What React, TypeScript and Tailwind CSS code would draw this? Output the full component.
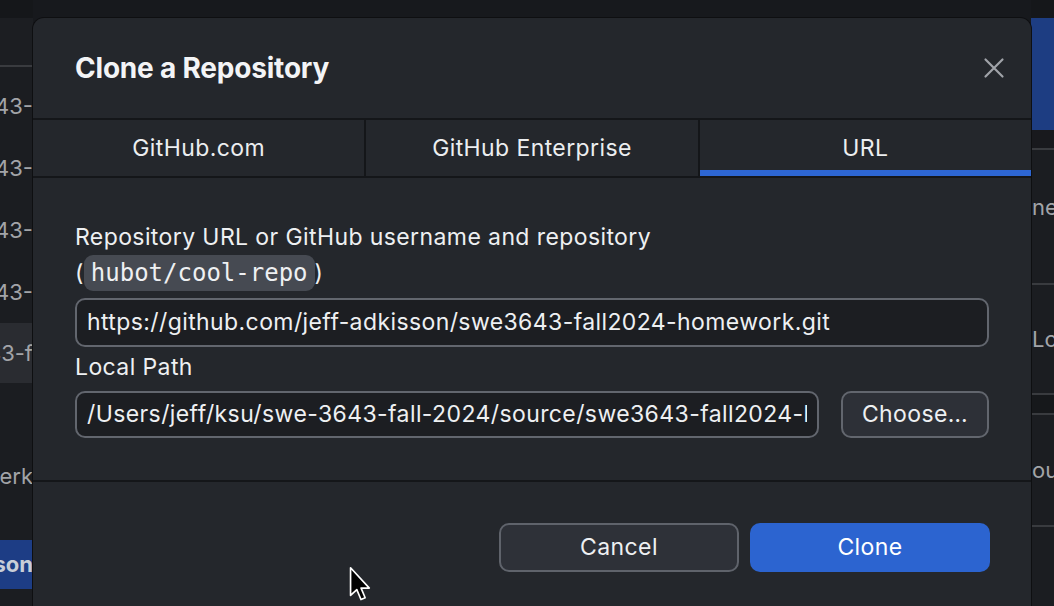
import React from "react";

function LeftStrip() {
  const rows = ["swe3643-", "swe3643-", "swe3643-", "swe3643-"];
  return (
    <div className="flex w-[33px] shrink-0 flex-col overflow-hidden bg-[#1b1d21] text-[22px] text-[#a2a4a8]">
      <div className="h-[18px] shrink-0 bg-[#15171a]" />
      <div className="h-[49px] shrink-0 border-b-2 border-[#393b3f] bg-[#1c1e22]" />
      <div className="h-[8px] shrink-0" />
      {rows.map((r, i) => (
        <div key={i} className="flex h-[62px] shrink-0 items-center justify-end whitespace-nowrap">
          {r}
        </div>
      ))}
      <div className="flex h-[60px] shrink-0 items-center justify-end whitespace-nowrap bg-[#2a2c31]">
        swe3643-f
      </div>
      <div className="h-[78px] shrink-0" />
      <div className="flex h-[30px] shrink-0 items-center justify-end whitespace-nowrap">Clerk</div>
      <div className="h-[49px] shrink-0" />
      <div className="flex h-[49px] shrink-0 items-center justify-end whitespace-nowrap bg-[#1d3d85] font-bold text-[#c9ced8]">
        Adkisson
      </div>
    </div>
  );
}

function RightStrip() {
  return (
    <div className="flex w-[23px] shrink-0 flex-col overflow-hidden bg-[#1b1d21] text-[22px] text-[#a2a4a8]">
      <div className="h-[18px] shrink-0 bg-[#15171a]" />
      <div className="h-[112px] shrink-0 bg-[#1d3d82]" />
      <div className="h-[20px] shrink-0 border-b-2 border-[#393b3f] bg-[#18191d]" />
      <div className="h-[133px] shrink-0 whitespace-nowrap pl-[1px] pt-[42px] leading-[30px]">ne</div>
      <div className="h-[2px] shrink-0 bg-[#393b3f]" />
      <div className="flex h-[108px] shrink-0 items-center whitespace-nowrap pl-[1px]">Lo</div>
      <div className="h-[22px] shrink-0 border-y-2 border-[#393b3f] bg-[#16181b]" />
      <div className="flex h-[110px] shrink-0 items-center whitespace-nowrap pl-[1px]">ou</div>
      <div className="h-[2px] shrink-0 bg-[#393b3f]" />
    </div>
  );
}

function Cursor() {
  return (
    <svg
      className="absolute left-[349px] top-[566px]"
      width="25"
      height="40"
      viewBox="0 0 24 38"
    >
      <path
        d="M1.5 1.5 L1.5 28 L7.5 22.5 L11.5 32 L15.5 30.3 L11.6 21 L19.5 21 Z"
        fill="#000"
        stroke="#fff"
        strokeWidth="1.6"
        strokeLinejoin="round"
      />
    </svg>
  );
}

export default function App() {
  return (
    <div className="relative h-[606px] w-[1054px] overflow-hidden bg-[#17191d] font-['Inter','Liberation_Sans',sans-serif]">
      <div className="flex h-full">
        <LeftStrip />
        <div className="flex-1" />
        <RightStrip />
      </div>

      <div className="absolute left-[33px] top-[18px] flex h-[620px] w-[998px] flex-col rounded-t-[11px] bg-[#24272c] shadow-[0_0_0_1px_#0e0f11]">
        {/* header */}
        <div className="flex h-[100px] shrink-0 items-center justify-between pl-[42px] pr-[26px]">
          <h1 className="text-[28px] font-bold tracking-[-0.2px] text-[#f3f4f6]">Clone a Repository</h1>
          <svg width="22" height="22" viewBox="0 0 22 22">
            <path d="M2.5 2.5 L19.5 19.5 M19.5 2.5 L2.5 19.5" stroke="#a0a3a9" strokeWidth="2.2" strokeLinecap="round" />
          </svg>
        </div>
        <div className="h-[2px] shrink-0 bg-[#141619]" />

        {/* tabs */}
        <div className="flex h-[56px] shrink-0 text-[23px] tracking-[0.4px] text-[#eceef0]">
          <div className="flex flex-1 items-center justify-center">GitHub.com</div>
          <div className="w-[2px] bg-[#141619]" />
          <div className="flex flex-1 items-center justify-center">GitHub Enterprise</div>
          <div className="w-[2px] bg-[#141619]" />
          <div className="flex flex-1 flex-col">
            <div className="flex flex-1 items-center justify-center pt-[6px]">URL</div>
            <div className="h-[6px] bg-[#2d66d3]" />
          </div>
        </div>
        <div className="h-[2px] shrink-0 bg-[#141619]" />

        {/* content */}
        <div className="flex shrink-0 flex-col px-[42px] pb-[42px] pt-[41px] text-[23px] tracking-[0.4px] text-[#eef0f2]">
          <div className="leading-[36px]">
            Repository URL or GitHub username and repository
            <br />
            (
            <code className="rounded-[9px] bg-[#464a52] px-[7px] py-[4px] font-['DejaVu_Sans_Mono',monospace] text-[24px] tracking-normal text-[#eef0f2]">
              hubot/cool-repo
            </code>
            )
          </div>
          <div className="mt-[7px] flex h-[49px] items-center overflow-hidden whitespace-nowrap rounded-[10px] border-2 border-[#62666e] bg-[#1c1e22] px-[10px]">
            https://github.com/jeff-adkisson/swe3643-fall2024-homework.git
          </div>
          <div className="mt-[2px] leading-[36px]">Local Path</div>
          <div className="mt-[6px] flex h-[47px] gap-[22px]">
            <div className="flex min-w-0 flex-1 items-center rounded-[10px] border-2 border-[#62666e] bg-[#1c1e22] px-[10px]">
              <div className="min-w-0 overflow-hidden whitespace-nowrap">
                /Users/jeff/ksu/swe-3643-fall-2024/source/swe3643-fall2024-homework
              </div>
            </div>
            <div className="flex w-[148px] shrink-0 items-center justify-center rounded-[10px] border-2 border-[#62666e] bg-[#2d3037]">
              Choose…
            </div>
          </div>
        </div>
        <div className="h-[2px] shrink-0 bg-[#141619]" />

        {/* footer */}
        <div className="flex shrink-0 justify-end gap-[11px] px-[41px] pt-[41px] text-[23px] tracking-[0.4px]">
          <div className="flex h-[49px] w-[240px] items-center justify-center rounded-[10px] border-2 border-[#5f636b] bg-[#2e3138] text-[#eef0f2]">
            Cancel
          </div>
          <div className="flex h-[49px] w-[240px] items-center justify-center rounded-[10px] bg-[#2c64d0] text-white">
            Clone
          </div>
        </div>
      </div>

      <Cursor />
    </div>
  );
}
